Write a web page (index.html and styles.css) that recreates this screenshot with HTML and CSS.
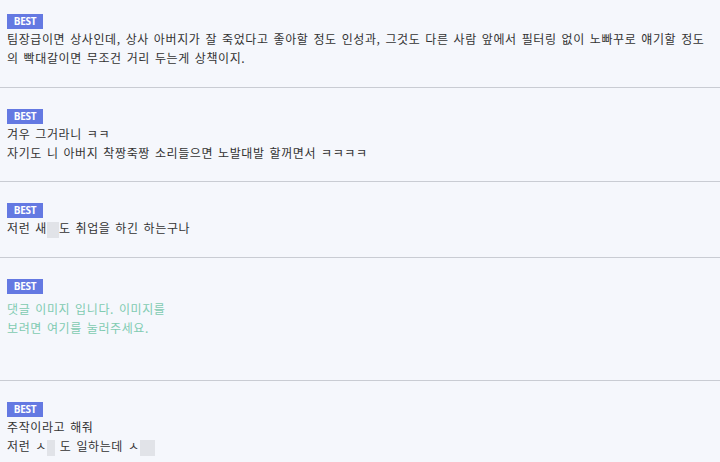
FILE: index.html
```html
<!DOCTYPE html>
<html lang="ko">
<head>
    <meta charset="UTF-8">
    <meta name="viewport" content="width=device-width, initial-scale=1.0">
    <title>베스트 댓글</title>
    <link rel="stylesheet" href="styles.css">
</head>
<body>
    <ul class="comment-list">
        <li class="comment">
            <span class="badge">BEST</span>
            <p class="text">팀장급이면 상사인데, 상사 아버지가 잘 죽었다고 좋아할 정도 인성과, 그것도 다른 사람 앞에서 필터링 없이 노빠꾸로 얘기할 정도의 빡대갈이면 무조건 거리 두는게 상책이지.</p>
        </li>
        <li class="comment">
            <span class="badge">BEST</span>
            <p class="text">겨우 그거라니 ㅋㅋ<br>자기도 니 아버지 착짱죽짱 소리들으면 노발대발 할꺼면서 ㅋㅋㅋㅋ</p>
        </li>
        <li class="comment">
            <span class="badge">BEST</span>
            <p class="text">저런 새<span class="blind"></span>도 취업을 하긴 하는구나</p>
        </li>
        <li class="comment">
            <span class="badge">BEST</span>
            <p class="text image-link">댓글 이미지 입니다. 이미지를<br>보려면 여기를 눌러주세요.</p>
        </li>
        <li class="comment">
            <span class="badge">BEST</span>
            <p class="text">주작이라고 해줘<br>저런 ㅅ<span class="blind small"></span> 도 일하는데 ㅅ<span class="blind wide"></span></p>
        </li>
    </ul>
</body>
</html>
```

FILE: styles.css
```css
body {
    margin: 0;
    background-color: #f5f7fc;
    color: #333;
    font-family: "Noto Sans CJK KR", "Noto Sans", sans-serif;
    font-size: 12px;
}
.comment-list {
    list-style: none;
    margin: 0;
    padding: 0;
}
.comment {
    padding: 21px 7px 19px;
    border-bottom: 1px solid #c9ccd3;
}
.comment:first-child {
    padding-top: 14px;
    padding-bottom: 20px;
}
.badge {
    display: block;
    width: 36px;
    height: 15px;
    line-height: 15px;
    background-color: #6479e2;
    color: #fff;
    font-family: "Open Sans", "Liberation Sans", sans-serif;
    font-size: 10px;
    font-weight: bold;
    text-align: center;
    letter-spacing: -0.3px;
}
.text {
    margin: 0;
    line-height: 19px;
    word-break: break-all;
    letter-spacing: 0.6px;
    word-spacing: 1px;
}
.image-link {
    color: #7fcbb1;
    padding-top: 5px;
    min-height: 62px;
}
.blind {
    display: inline-block;
    width: 12px;
    height: 16px;
    vertical-align: -5px;
    background-color: #e1e3e8;
}
.blind.small {
    width: 8px;
}
.blind.wide {
    width: 15px;
}
```
